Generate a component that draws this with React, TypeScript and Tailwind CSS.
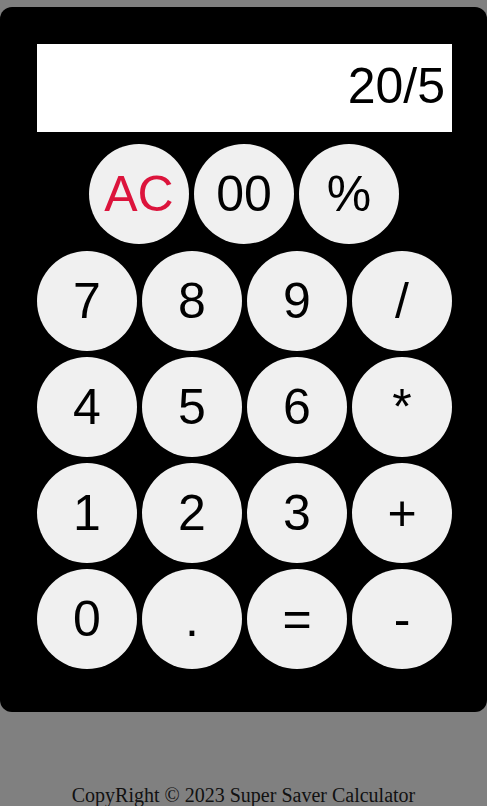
import React from "react";

const filas: string[][] = [
  ["7", "8", "9", "/"],
  ["4", "5", "6", "*"],
  ["1", "2", "3", "+"],
  ["0", ".", "=", "-"],
];

const Boton = ({ valor, rojo }: { valor: string; rojo?: boolean }) => (
  <button
    type="button"
    className={
      "w-[100px] h-[100px] shrink-0 rounded-full bg-[#f0f0f0] flex items-center justify-center text-[50px] leading-none " +
      (rojo ? "text-[#dc143c]" : "text-black")
    }
  >
    {valor}
  </button>
);

export default function App() {
  return (
    <div className="bg-[#f0f0f0]">
      <div
        className="bg-[#808080] pt-[7px] h-[806px]"
        style={{ fontFamily: '"Liberation Sans", Arial, sans-serif' }}
      >
        {/* Calculadora */}
        <div className="bg-black rounded-xl pl-[37px] pr-[35px] pt-[37px] pb-[43px]">
          <div className="h-[88px] bg-white flex items-center justify-end pr-[7px] pb-[4px] text-[50px] leading-none text-black">
            20/5
          </div>

          <div className="flex justify-center gap-[5px] mt-[12px] pr-[1px]">
            <Boton valor="AC" rojo />
            <Boton valor="00" />
            <Boton valor="%" />
          </div>

          <div className="flex flex-col gap-[6px] mt-[7px]">
            {filas.map((fila, i) => (
              <div key={i} className="flex gap-[5px]">
                {fila.map((v) => (
                  <Boton key={v} valor={v} />
                ))}
              </div>
            ))}
          </div>
        </div>

        {/* Pie */}
        <p
          className="text-center text-[20px] leading-[23px] text-[#111] mt-[72px]"
          style={{ fontFamily: '"Liberation Serif", "Times New Roman", serif' }}
        >
          CopyRight © 2023 Super Saver Calculator
        </p>
      </div>
    </div>
  );
}
